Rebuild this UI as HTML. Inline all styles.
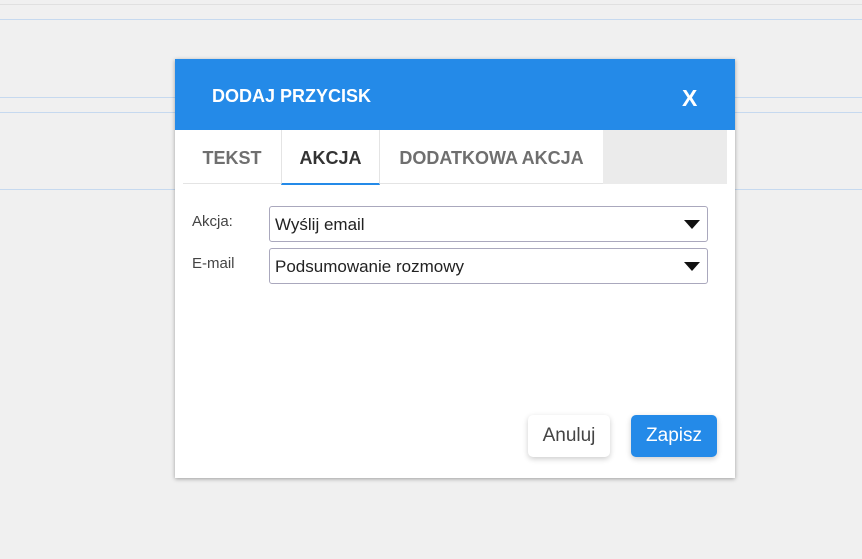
<!DOCTYPE html>
<html><head><meta charset="utf-8"><style>
*{box-sizing:border-box;margin:0;padding:0}
body{width:862px;height:559px;background:#f0f0f0;position:relative;overflow:hidden;font-family:"Liberation Sans",Arial,sans-serif}
.l{position:absolute;left:0;width:862px;height:1px;background:#c6d9ef}
.dlg{position:absolute;left:175px;top:59px;width:560px;height:419px;background:#fff;box-shadow:0 1px 4px rgba(0,0,0,.35)}
.hd{position:absolute;left:0;top:0;width:560px;height:71px;background:#248ae8;color:#fff}
.hd .t{position:absolute;left:37px;top:27px;font-size:18px;font-weight:bold}
.hd .x{position:absolute;left:507px;top:26px;font-size:23px;font-weight:bold}
.tabs{position:absolute;left:8px;top:71px;width:544px;height:54px;border-bottom:1px solid #e4e4e4}
.tab{position:absolute;top:0;height:54px;font-size:18px;font-weight:bold;color:#6f6f6f;text-align:center;line-height:56px}
.lab{position:absolute;left:17px;font-size:15px;color:#444}
.sel{position:absolute;left:94px;width:439px;height:36px;border:1px solid #aaa8bd;border-radius:3px;font-size:17px;color:#222;padding:8px 0 0 5px}
.sel:after{content:"";position:absolute;right:7px;top:13px;border-left:8px solid transparent;border-right:8px solid transparent;border-top:9px solid #111}
.btn{position:absolute;top:356px;height:42px;border-radius:5px;font-size:19px;text-align:center;line-height:42px;box-shadow:0 2px 6px rgba(0,0,0,.2)}
</style></head><body>
<div class="l" style="top:4px;background:#e0e0e0"></div>
<div class="l" style="top:19px"></div>
<div class="l" style="top:97px"></div>
<div class="l" style="top:112px"></div>
<div class="l" style="top:189px"></div>
<div class="dlg">
<div class="hd"><div class="t">DODAJ PRZYCISK</div><div class="x">X</div></div>
<div class="tabs">
<div class="tab" style="left:0;width:98px">TEKST</div>
<div class="tab" style="left:98px;width:99px;color:#333;border-left:1px solid #e4e4e4;border-right:1px solid #e4e4e4;border-bottom:2px solid #248ae8;height:55px">AKCJA</div>
<div class="tab" style="left:197px;width:223px">DODATKOWA AKCJA</div>
<div class="tab" style="left:420px;width:124px;background:#ebebeb"></div>
</div>
<div class="lab" style="top:154px">Akcja:</div>
<div class="sel" style="top:147px">Wyślij email</div>
<div class="lab" style="top:196px">E-mail</div>
<div class="sel" style="top:189px">Podsumowanie rozmowy</div>
<div class="btn" style="left:353px;width:82px;background:#fff;color:#444">Anuluj</div>
<div class="btn" style="left:456px;width:86px;background:#248ae8;color:#fff">Zapisz</div>
</div>
</body></html>
